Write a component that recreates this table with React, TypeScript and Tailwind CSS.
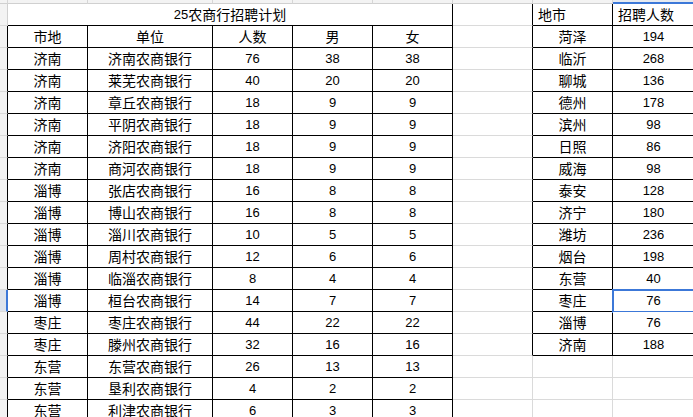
import { clsx } from "clsx";
import type { ReactNode } from "react";

const LEFT_ROWS: [string, string, number, number, number][] = [
  ["济南", "济南农商银行", 76, 38, 38],
  ["济南", "莱芜农商银行", 40, 20, 20],
  ["济南", "章丘农商银行", 18, 9, 9],
  ["济南", "平阴农商银行", 18, 9, 9],
  ["济南", "济阳农商银行", 18, 9, 9],
  ["济南", "商河农商银行", 18, 9, 9],
  ["淄博", "张店农商银行", 16, 8, 8],
  ["淄博", "博山农商银行", 16, 8, 8],
  ["淄博", "淄川农商银行", 10, 5, 5],
  ["淄博", "周村农商银行", 12, 6, 6],
  ["淄博", "临淄农商银行", 8, 4, 4],
  ["淄博", "桓台农商银行", 14, 7, 7],
  ["枣庄", "枣庄农商银行", 44, 22, 22],
  ["枣庄", "滕州农商银行", 32, 16, 16],
  ["东营", "东营农商银行", 26, 13, 13],
  ["东营", "垦利农商银行", 4, 2, 2],
  ["东营", "利津农商银行", 6, 3, 3],
];

const RIGHT_ROWS: [string, number][] = [
  ["菏泽", 194],
  ["临沂", 268],
  ["聊城", 136],
  ["德州", 178],
  ["滨州", 98],
  ["日照", 86],
  ["威海", 98],
  ["泰安", 128],
  ["济宁", 180],
  ["潍坊", 236],
  ["烟台", 198],
  ["东营", 40],
  ["枣庄", 76],
  ["淄博", 76],
  ["济南", 188],
];

const SELECTED_ROW = 13;
const ROW_COUNT = 19;

function Num({ children }: { children: ReactNode }) {
  return <span className="font-['Liberation_Sans',sans-serif] text-[13px]">{children}</span>;
}

function Cell({
  children,
  right = "grid",
  bottom = "grid",
  align = "center",
  span,
}: {
  children?: ReactNode;
  right?: "grid" | "black";
  bottom?: "grid" | "black";
  align?: "center" | "left";
  span?: boolean;
}) {
  return (
    <div
      className={clsx(
        "flex items-center overflow-hidden whitespace-nowrap border-r border-b bg-white leading-none text-black",
        right === "black" ? "border-r-black" : "border-r-[#dadada]",
        bottom === "black" ? "border-b-black" : "border-b-[#dadada]",
        align === "center" ? "justify-center" : "justify-start pl-[5px]",
        span && "col-span-5"
      )}
    >
      {children}
    </div>
  );
}

function RowHeader({ row }: { row: number }) {
  const selected = row === SELECTED_ROW;
  return (
    <div
      className={clsx(
        "border-b border-b-[#dadada]",
        selected ? "border-r-2 border-r-[#3c78d8] bg-[#dde3ec]" : "border-r bg-[#f3f3f3]",
        !selected && (row >= 1 ? "border-r-black" : "border-r-[#d0d0d0]")
      )}
    />
  );
}

function SheetRow({ row }: { row: number }) {
  const inRight = row <= 15;
  const rb = inRight ? "black" : "grid";
  let left: ReactNode;
  if (row === 0) {
    left = (
      <Cell span right="black" bottom="black">
        <Num>25</Num>农商行招聘计划
      </Cell>
    );
  } else if (row === 1) {
    left = (
      <>
        {["市地", "单位", "人数", "男", "女"].map((h) => (
          <Cell key={h} right="black" bottom="black">
            {h}
          </Cell>
        ))}
      </>
    );
  } else {
    const d = LEFT_ROWS[row - 2];
    left = (
      <>
        <Cell right="black" bottom="black">{d[0]}</Cell>
        <Cell right="black" bottom="black">{d[1]}</Cell>
        <Cell right="black" bottom="black"><Num>{d[2]}</Num></Cell>
        <Cell right="black" bottom="black"><Num>{d[3]}</Num></Cell>
        <Cell right="black" bottom="black"><Num>{d[4]}</Num></Cell>
      </>
    );
  }

  const r = row >= 1 && row <= 15 ? RIGHT_ROWS[row - 1] : null;

  return (
    <>
      <RowHeader row={row} />
      {left}
      <Cell right={rb} />
      {row === 0 ? (
        <>
          <Cell right="black" bottom="black" align="left">地市</Cell>
          <Cell right="black" bottom="black" align="left">招聘人数</Cell>
        </>
      ) : (
        <>
          <Cell right={rb} bottom={rb}>{r?.[0]}</Cell>
          <div className="relative flex">
            <Cell right={rb} bottom={rb}>{r && <Num>{r[1]}</Num>}</Cell>
            {row === SELECTED_ROW && (
              <div className="pointer-events-none absolute -top-px -left-px h-[24px] w-[90px] border-2 border-[#3c78d8]" />
            )}
          </div>
        </>
      )}
    </>
  );
}

export default function App() {
  const cols = [0, 1, 2, 3, 4, 5, 6, 7, 8];
  return (
    <div className="h-[417px] w-[693px] overflow-hidden bg-white font-['Liberation_Sans','Noto_Sans_CJK_SC',sans-serif] text-[14px]">
      <div className="grid grid-cols-[8px_80px_125px_80px_80px_80px_80px_80px_82px] grid-rows-[4px_repeat(19,22px)] [&>div.relative>div]:flex-1">
        {cols.map((c) => (
          <div
            key={c}
            className={clsx(
              "border-r border-r-[#d6d6d6]",
              c === 8 ? "border-b-2 border-b-[#3c78d8] bg-[#e6eaf0]" : "border-b border-b-[#d0d0d0] bg-[#f3f3f3]"
            )}
          />
        ))}
        {Array.from({ length: ROW_COUNT }, (_, i) => (
          <SheetRow key={i} row={i} />
        ))}
      </div>
    </div>
  );
}
